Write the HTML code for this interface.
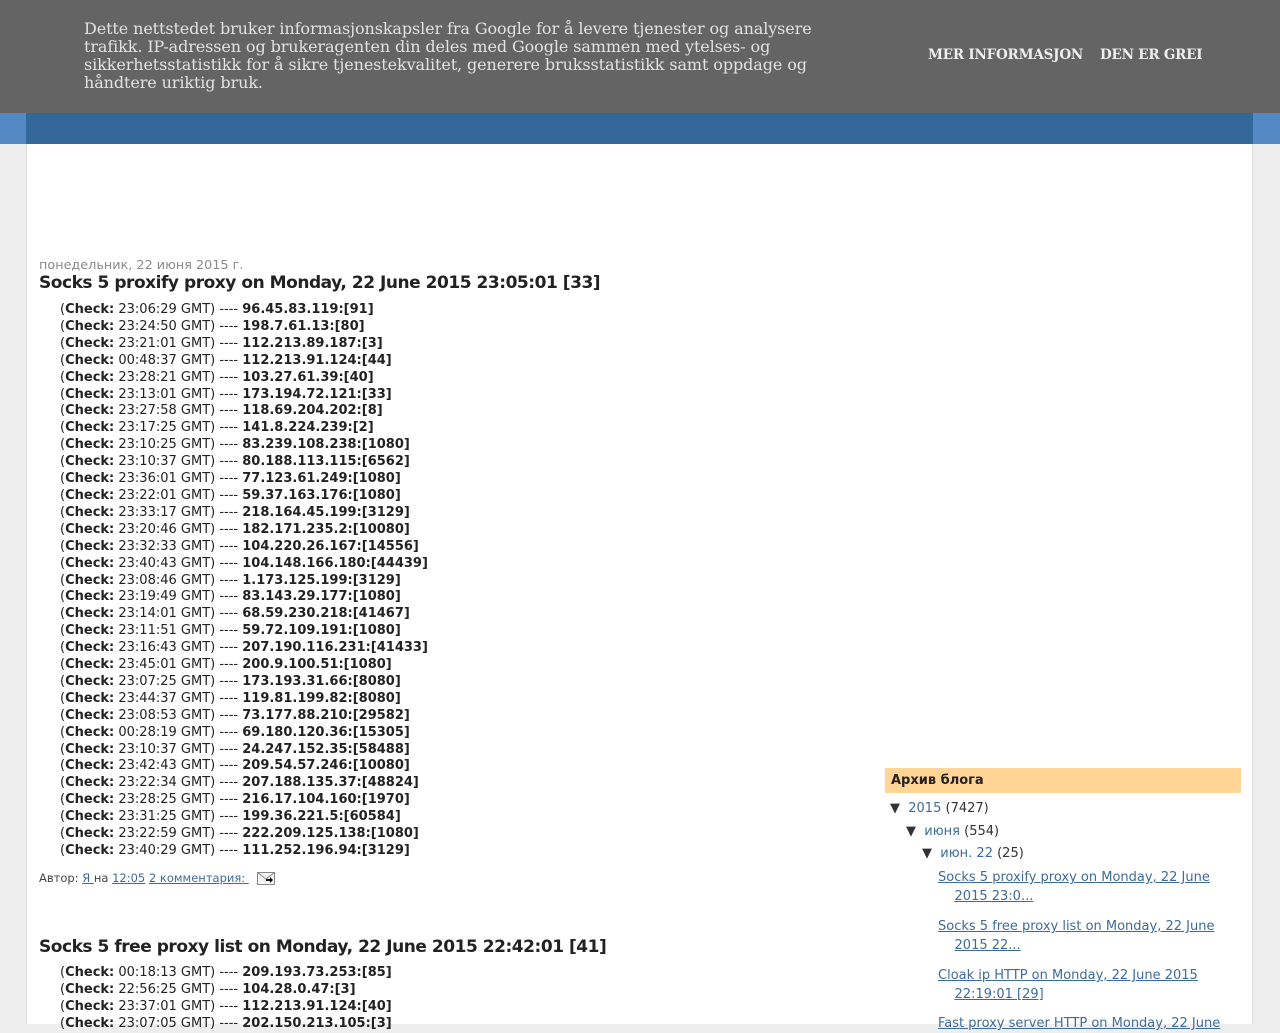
<!DOCTYPE html>
<html><head><meta charset="utf-8">
<style>
html,body{margin:0;padding:0;width:1280px;height:1024px;overflow:hidden;background:#eeeeee;font-family:"DejaVu Sans","Liberation Sans",sans-serif;color:#222}
#banner{position:absolute;left:0;top:0;width:1280px;height:113px;background:#646464;}
#banner .txt{position:absolute;left:84px;top:20px;width:745px;font-family:"DejaVu Serif","Liberation Serif",serif;font-size:16px;line-height:18px;color:#e2e2e2;letter-spacing:-0.1px}
#banner .btn{position:absolute;top:47px;font-family:"DejaVu Serif","Liberation Serif",serif;font-weight:bold;font-size:13.5px;color:#eeeeee;letter-spacing:-0.2px}
#bar{position:absolute;left:0;top:113px;width:1280px;height:31px;background:#5589c5}
#bar2{position:absolute;left:26px;top:113px;width:1227px;height:31px;background:#336699}
#main{position:absolute;left:26px;top:144px;width:1227px;height:880px;background:#fff;border-left:1px solid #ddd;border-right:1px solid #ddd;box-sizing:border-box}
.date{position:absolute;left:39px;top:258px;font-size:12.8px;color:#8a8a8a}
.title{position:absolute;left:39px;font-size:17px;font-weight:bold;color:#222;white-space:nowrap;letter-spacing:-0.47px}
.list{position:absolute;left:60px;font-size:13px;line-height:16.9px;color:#222;white-space:nowrap}
.foot{position:absolute;left:39px;top:871px;font-size:11.5px;color:#444}
.foot a{color:#3d6c9b;text-decoration:underline}
a{color:#3d6c9b}
#side{position:absolute;left:885px;top:768px;width:356px}
#side .h{background:#ffd595;height:25px;font-weight:bold;font-size:13px;line-height:25px;padding-left:6px;color:#222}
.tr{position:absolute;font-size:13px;color:#333;white-space:nowrap}
.tr a{color:#3d6c9b;text-decoration:none}
.pl{position:absolute;left:938px;width:290px;font-size:13px;line-height:19px;color:#3d6c9b;white-space:nowrap}
.pl a{text-decoration:underline;color:#3d6c9b}
</style></head><body>
<div id="banner">
<div class="txt">Dette nettstedet bruker informasjonskapsler fra Google for å levere tjenester og analysere trafikk. IP-adressen og brukeragenten din deles med Google sammen med ytelses- og sikkerhetsstatistikk for å sikre tjenestekvalitet, generere bruksstatistikk samt oppdage og håndtere uriktig bruk.</div>
<div class="btn" style="left:928px">MER INFORMASJON</div>
<div class="btn" style="left:1100px">DEN ER GREI</div>
</div>
<div id="bar"></div><div id="bar2"></div>
<div id="main"></div>
<div class="date">понедельник, 22 июня 2015 г.</div>
<div class="title" style="top:273px">Socks 5 proxify proxy on Monday, 22 June 2015 23:05:01 [33]</div>
<div class="list" style="top:302px">
(<b>Check:</b> 23:06:29 GMT) ---- <b>96.45.83.119:[91]</b><br>
(<b>Check:</b> 23:24:50 GMT) ---- <b>198.7.61.13:[80]</b><br>
(<b>Check:</b> 23:21:01 GMT) ---- <b>112.213.89.187:[3]</b><br>
(<b>Check:</b> 00:48:37 GMT) ---- <b>112.213.91.124:[44]</b><br>
(<b>Check:</b> 23:28:21 GMT) ---- <b>103.27.61.39:[40]</b><br>
(<b>Check:</b> 23:13:01 GMT) ---- <b>173.194.72.121:[33]</b><br>
(<b>Check:</b> 23:27:58 GMT) ---- <b>118.69.204.202:[8]</b><br>
(<b>Check:</b> 23:17:25 GMT) ---- <b>141.8.224.239:[2]</b><br>
(<b>Check:</b> 23:10:25 GMT) ---- <b>83.239.108.238:[1080]</b><br>
(<b>Check:</b> 23:10:37 GMT) ---- <b>80.188.113.115:[6562]</b><br>
(<b>Check:</b> 23:36:01 GMT) ---- <b>77.123.61.249:[1080]</b><br>
(<b>Check:</b> 23:22:01 GMT) ---- <b>59.37.163.176:[1080]</b><br>
(<b>Check:</b> 23:33:17 GMT) ---- <b>218.164.45.199:[3129]</b><br>
(<b>Check:</b> 23:20:46 GMT) ---- <b>182.171.235.2:[10080]</b><br>
(<b>Check:</b> 23:32:33 GMT) ---- <b>104.220.26.167:[14556]</b><br>
(<b>Check:</b> 23:40:43 GMT) ---- <b>104.148.166.180:[44439]</b><br>
(<b>Check:</b> 23:08:46 GMT) ---- <b>1.173.125.199:[3129]</b><br>
(<b>Check:</b> 23:19:49 GMT) ---- <b>83.143.29.177:[1080]</b><br>
(<b>Check:</b> 23:14:01 GMT) ---- <b>68.59.230.218:[41467]</b><br>
(<b>Check:</b> 23:11:51 GMT) ---- <b>59.72.109.191:[1080]</b><br>
(<b>Check:</b> 23:16:43 GMT) ---- <b>207.190.116.231:[41433]</b><br>
(<b>Check:</b> 23:45:01 GMT) ---- <b>200.9.100.51:[1080]</b><br>
(<b>Check:</b> 23:07:25 GMT) ---- <b>173.193.31.66:[8080]</b><br>
(<b>Check:</b> 23:44:37 GMT) ---- <b>119.81.199.82:[8080]</b><br>
(<b>Check:</b> 23:08:53 GMT) ---- <b>73.177.88.210:[29582]</b><br>
(<b>Check:</b> 00:28:19 GMT) ---- <b>69.180.120.36:[15305]</b><br>
(<b>Check:</b> 23:10:37 GMT) ---- <b>24.247.152.35:[58488]</b><br>
(<b>Check:</b> 23:42:43 GMT) ---- <b>209.54.57.246:[10080]</b><br>
(<b>Check:</b> 23:22:34 GMT) ---- <b>207.188.135.37:[48824]</b><br>
(<b>Check:</b> 23:28:25 GMT) ---- <b>216.17.104.160:[1970]</b><br>
(<b>Check:</b> 23:31:25 GMT) ---- <b>199.36.221.5:[60584]</b><br>
(<b>Check:</b> 23:22:59 GMT) ---- <b>222.209.125.138:[1080]</b><br>
(<b>Check:</b> 23:40:29 GMT) ---- <b>111.252.196.94:[3129]</b>
</div>
<div class="foot">Автор: <a>Я </a>на <a>12:05</a> <a>2 комментария: </a>
<svg width="18" height="14" viewBox="0 0 18 14" style="vertical-align:-3px;margin-left:8px"><rect x="0.5" y="1.5" width="17" height="12" fill="#f4f4f4" stroke="#888"/><path d="M0.5 1.5 L9 8 L17.5 1.5" fill="none" stroke="#888"/><path d="M9 8h4v-2l3 3-3 3v-2h-4z" fill="#111"/></svg></div>
<div class="title" style="top:937px">Socks 5 free proxy list on Monday, 22 June 2015 22:42:01 [41]</div>
<div class="list" style="top:965px">
(<b>Check:</b> 00:18:13 GMT) ---- <b>209.193.73.253:[85]</b><br>
(<b>Check:</b> 22:56:25 GMT) ---- <b>104.28.0.47:[3]</b><br>
(<b>Check:</b> 23:37:01 GMT) ---- <b>112.213.91.124:[40]</b><br>
(<b>Check:</b> 23:07:05 GMT) ---- <b>202.150.213.105:[3]</b>
</div>
<div id="side"><div class="h">Архив блога</div></div>
<div class="tr" style="left:890px;top:801px">▼&nbsp; <a>2015</a> (7427)</div>
<div class="tr" style="left:906px;top:824px">▼&nbsp; <a>июня</a> (554)</div>
<div class="tr" style="left:922px;top:846px">▼&nbsp; <a>июн. 22</a> (25)</div>
<div class="pl" style="top:868px"><a>Socks 5 proxify proxy on Monday, 22 June</a><br>&nbsp;&nbsp;&nbsp;&nbsp;<a>2015 23:0...</a></div>
<div class="pl" style="top:917px"><a>Socks 5 free proxy list on Monday, 22 June</a><br>&nbsp;&nbsp;&nbsp;&nbsp;<a>2015 22...</a></div>
<div class="pl" style="top:966px"><a>Cloak ip HTTP on Monday, 22 June 2015</a><br>&nbsp;&nbsp;&nbsp;&nbsp;<a>22:19:01 [29]</a></div>
<div class="pl" style="top:1014px"><a>Fast proxy server HTTP on Monday, 22 June</a></div>
</body></html>
